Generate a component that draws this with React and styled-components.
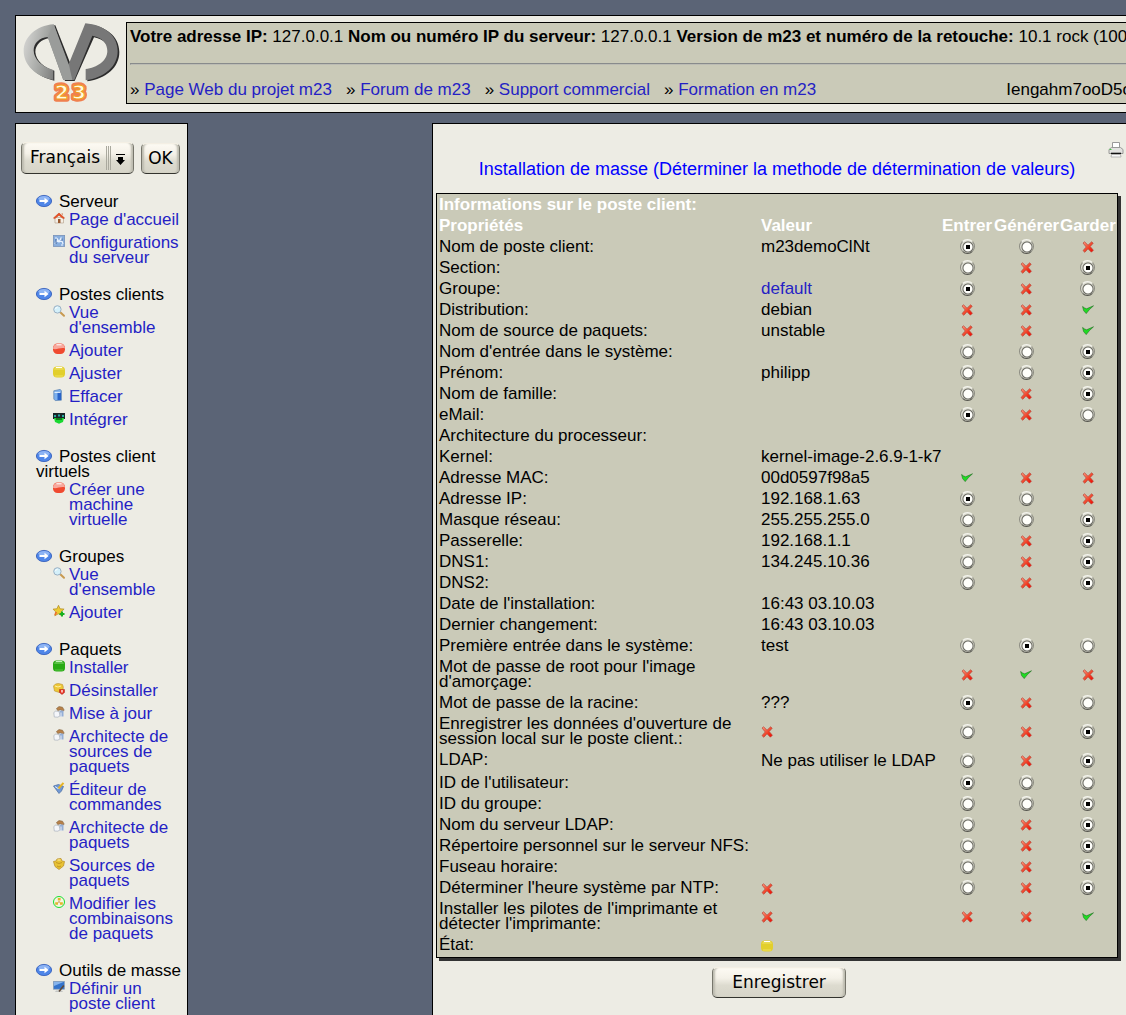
import React from "react";
import styled, { createGlobalStyle } from "styled-components";

const GlobalStyle = createGlobalStyle`
  *, *::before, *::after { box-sizing: border-box; }
  body {
    margin: 0;
    background: #5b6476;
    color: #000;
    font: 17px/15px "Liberation Sans", Arial, sans-serif;
  }
  svg { display: block; flex: none; overflow: visible; }
`;

const Page = styled.div`
  display: flex;
  flex-direction: column;
  gap: 10px;
  height: 100vh;
  padding: 15px 0 0 15px;
  overflow: hidden;
`;

const Link = styled.a`
  color: #251fc4;
  text-decoration: none;
`;

/* ---------- header ---------- */

const Header = styled.header`
  display: flex;
  flex: none;
  height: 98px;
  margin-right: -20px;
  padding: 6px 9px 8px 7px;
  gap: 6px;
  background: #edece4;
  border: 1px solid #000;
`;

const InfoBox = styled.div`
  flex: 1;
  min-width: 0;
  padding: 6px 3px;
  background: #cacab8;
  border: 1px solid #000;
  white-space: nowrap;
`;

const InfoLine = styled.p`
  margin: 0;
`;

const Rule = styled.hr`
  height: 2px;
  margin: 19px 0 17px;
  border: 1px solid;
  border-color: #888b8c #bcbcb4 #bcbcb4 #888b8c;
`;

const LinkBar = styled.nav`
  display: flex;
  gap: 14px;
`;

const Quote = styled.span`
  margin-left: auto;
`;

/* ---------- side menu ---------- */

const Columns = styled.div`
  display: flex;
  flex: 1;
  min-height: 0;
  gap: 244px;
`;

const Sidebar = styled.aside`
  flex: none;
  width: 173px;
  padding: 18px 4px 0 5px;
  background: #edece4;
  border: 1px solid #000;
  border-bottom: 0;
`;

const LanguageForm = styled.form`
  display: flex;
  align-items: flex-end;
  gap: 7px;
  margin-bottom: 20px;
`;

const controlFace = `
  appearance: none;
  margin: 0;
  border: 1px solid;
  border-color: #f4efe4 #77766c #33332e #77766c;
  border-radius: 5px;
  background: linear-gradient(#fdfaf3, #f4f1e8 35%, #dddbcf 60%, #d6d4c8);
  box-shadow: inset 3px 0 2px -1px #bdbcb0, inset -3px 0 2px -1px #bdbcb0,
    inset 0 1px 0 #fffdf6;
  color: #000;
  font: 17px/20px "DejaVu Sans", Verdana, sans-serif;
`;

const SelectWrap = styled.div`
  display: grid;
  width: 113px;
  > * { grid-area: 1 / 1; }
  > svg { justify-self: end; align-self: center; pointer-events: none; }
`;

const LanguageSelect = styled.select`
  ${controlFace}
  width: 100%;
  height: 32px;
  padding: 0 24px 2px 8px;
`;

const Button = styled.button`
  ${controlFace}
  width: ${(p) => p.$width};
  height: 31px;
  padding: 0 0 2px;
`;

const MenuGroup = styled.section`
  margin: 0 0 22px 15px;
`;

const MenuHeading = styled.h2`
  margin: 0 0 3px;
  font: inherit;
  svg { display: inline-block; margin-right: 7px; vertical-align: 0; }
`;

const MenuList = styled.ul`
  display: flex;
  flex-direction: column;
  gap: 8px;
  margin: 0;
  padding: 0 0 0 17px;
  list-style: none;
`;

const MenuItem = styled.li`
  display: flex;
  gap: 4px;
`;

/* ---------- main panel ---------- */

const Panel = styled.main`
  flex: 1;
  margin-right: -16px;
  padding: 17px 0 0 3px;
  background: #edece4;
  border: 1px solid #000;
  border-bottom: 0;
`;

const Content = styled.div`
  width: fit-content;
`;

const PrintRow = styled.div`
  display: flex;
  justify-content: flex-end;
  margin-right: -6px;
`;

const Title = styled.h1`
  margin: 1px 0 14px;
  color: #0000ff;
  font: 18px/20px "Liberation Sans", Arial, sans-serif;
  text-align: center;
`;

const ClientTable = styled.table`
  table-layout: fixed;
  width: 682px;
  border: 1px solid #000;
  border-spacing: 2px;
  background: #cacab8;
  box-shadow: 3px 3px 0 #333;
`;

const Column = styled.col`
  width: ${(p) => p.$width};
`;

const HeadCell = styled.th`
  padding: 1px 0 3px;
  color: #fff;
  text-align: left;
  white-space: nowrap;
`;

const LabelCell = styled.th`
  padding: ${(p) => (p.$tall ? "1px 0 5px" : "1px 0 3px")};
  font-weight: normal;
  text-align: left;
  ${(p) => p.$wrap && "padding-right: 20px;"}
`;

const Cell = styled.td`
  padding: 1px 0 3px;
  white-space: nowrap;
  svg { margin-top: 2px; }
`;

const MarkCell = styled.td`
  padding: 0 0 2px;
  svg { margin: 1px auto 0; }
`;

const Radio = styled.input`
  appearance: none;
  display: block;
  width: 15px;
  height: 15px;
  margin: 0 auto;
  border: 1px solid;
  border-color: #f5f5ee #8c8c82 #55554e #8c8c82;
  border-radius: 50%;
  background: radial-gradient(circle at 7px 7px, #fffffb 4px, #66665e 5px, #d6d6ca 6px, #e4e4da 7px);
  &:checked {
    background: linear-gradient(#000, #000) 5px 5px / 4px 4px no-repeat,
      radial-gradient(circle at 7px 7px, #fffffb 4px, #66665e 5px, #d6d6ca 6px, #e4e4da 7px);
  }
`;

const Actions = styled.div`
  display: flex;
  justify-content: center;
  padding: 9px 0 0 4px;
`;

/* ---------- drawings ---------- */

const Logo = () => (
  <svg width="97" height="80" viewBox="24 21 291 240" role="img" aria-label="m23">
    <defs>
      <linearGradient id="steel" x1="0" y1="0" x2="1" y2="0.3">
        <stop offset="0" stopColor="#dcdcda" />
        <stop offset="0.55" stopColor="#a2a4a1" />
        <stop offset="1" stopColor="#707070" />
      </linearGradient>
      <filter id="glow" x="-20%" y="-30%" width="140%" height="160%">
        <feGaussianBlur stdDeviation="2" />
      </filter>
    </defs>
    <g transform="translate(5 3)" fill="#2c2c2c">
      <path d="M98 30C54 40 26 72 26 108C26 150 62 182 113 194V164C82 156 58 134 56 108C56 86 74 70 98 66L145 195H174L232 64C264 70 276 88 276 110C276 138 246 160 212 164V196C268 188 308 155 308 108C308 62 268 30 211 25L164 150L116 28Z" />
    </g>
    <path fill="url(#steel)" d="M116 28C62 32 26 68 26 108C26 150 62 184 115 195V165C82 156 56 134 56 106C56 84 74 68 98 66L145 195H160V150Z" />
    <path fill="#777" d="M211 25C268 30 308 62 308 108C308 155 268 188 212 196V162C246 158 277 138 277 108C277 86 264 68 232 62L178 195H145L160 150Z" />
    <path fill="#9a9c9a" d="M116 28L162 150L172 195H145L98 66Z" />
    <g fontFamily="DejaVu Sans, sans-serif" fontWeight="bold" fontSize="60" textAnchor="middle" strokeLinejoin="round">
      <g fill="#f08050" stroke="#f08050" strokeWidth="16" filter="url(#glow)">
        <text x="140" y="252">2</text>
        <text x="192" y="252">3</text>
      </g>
      <g fill="#fffbe0" stroke="#f0a020" strokeWidth="3">
        <text x="140" y="252">2</text>
        <text x="192" y="252">3</text>
      </g>
    </g>
  </svg>
);

const ArrowIcon = () => (
  <svg width="16" height="12" viewBox="0 0 16 12" aria-hidden="true">
    <ellipse cx="8" cy="6" rx="7.6" ry="5.6" fill="#4f86e8" stroke="#2a55b8" strokeWidth="0.8" />
    <ellipse cx="8" cy="3.6" rx="5.6" ry="2.6" fill="#a8c8fa" opacity="0.7" />
    <path d="M3.500 5h5V2.800L12.600 6 8.500 9.200V7h-5z" fill="#fff" />
  </svg>
);

const DropIcon = () => (
  <svg width="29" height="28" viewBox="0 0 29 28" aria-hidden="true">
    <path d="M1.500 2v24M3.500 2v24M5.500 2v24" stroke="#aaa99e" />
    <path d="M11 10.500h9" stroke="#000" />
    <path d="M13 13h5v3h2l-4.500 5L11 16h2z" fill="#000" />
  </svg>
);

const PrinterIcon = () => (
  <svg width="16" height="17" viewBox="0 0 16 17" aria-hidden="true">
    <path d="M4.500 7V1.500h7V7" fill="#fff" stroke="#999" />
    <path d="M1 8.500L3.500 6.500h9L15 8.500v4H1z" fill="#e2e2e0" stroke="#9a9a98" />
    <path d="M3 12.500h10" stroke="#111" strokeWidth="1.600" />
    <path d="M3.500 13.500h9l.5 2.500H3z" fill="#f8f8f8" stroke="#aaa" strokeWidth="0.800" />
    <path d="M1.500 8.500h2" stroke="#4c4" />
  </svg>
);

const CrossIcon = () => (
  <svg width="12" height="12" viewBox="0 0 12 12" role="img" aria-label="non">
    <defs>
      <linearGradient id="red" x1="0" y1="0" x2="1" y2="1">
        <stop offset="0" stopColor="#ff9a80" />
        <stop offset="0.6" stopColor="#f03a20" />
        <stop offset="1" stopColor="#f00000" />
      </linearGradient>
    </defs>
    <path
      d="M1 2L2.600 .8 6 4.200 9.600 .8 11.200 2.200 8.200 5.600 11.400 9.200 9.400 11.200 6 7.800 2.800 11.300 1 9.600 4.200 6z"
      fill="url(#red)" stroke="#b8483a" strokeWidth="0.700" strokeLinejoin="round"
    />
  </svg>
);

const CheckIcon = () => (
  <svg width="12" height="12" viewBox="0 0 12 12" role="img" aria-label="oui">
    <path d="M.6 2.500L2.600 4 4.600 4.800 11.500 1.800 7.500 5.500 4.200 9.600 1.600 6.600z" fill="#1fdc22" stroke="#246b24" strokeWidth="0.600" />
  </svg>
);

const drawings = {
  home: (
    <>
      <path d="M2 5.500h8.500V11H2z" fill="#f4efe6" stroke="#b9a894" strokeWidth=".7" />
      <path d="M.5 6L6 1l5.500 5-1.300.6L6 3.200 1.800 6.600z" fill="#f05020" stroke="#c8401c" strokeWidth=".6" />
      <path d="M5 7h2.500v4H5z" fill="#9a5a30" />
      <path d="M8.500 1.200h1.500v2.400L8.500 2.300z" fill="#d8a080" />
    </>
  ),
  config: (
    <>
      <rect x=".4" y=".4" width="11.200" height="11" fill="#88aede" stroke="#7892b8" strokeWidth=".8" />
      <path d="M2 9l2.500-5L6 7l2-4 2 6M2 3h2M8 10h2M3 6.500h6" stroke="#e8f2ff" strokeWidth="1.200" fill="none" />
      <path d="M3 4v5M9 3.500V6" stroke="#3c64a0" />
    </>
  ),
  search: (
    <>
      <path d="M7 7l4 3.800" stroke="#c89a50" strokeWidth="2" strokeLinecap="round" />
      <circle cx="4.400" cy="4.400" r="3.700" fill="#d4f0fa" stroke="#9ab0c4" />
      <path d="M2.500 4a2.200 2.200 0 0 1 2-1.700" stroke="#fff" fill="none" />
    </>
  ),
  red: (
    <>
      <rect y=".5" width="12" height="10.500" rx="4.500" fill="#f04a30" />
      <path d="M0 5.800C3 7.200 8 4.200 12 5.400 11.500 1.800 9.500 .5 6 .5S.4 2 0 5.800z" fill="#f8a89c" />
      <path d="M3.500 1.800h5" stroke="#fff" />
    </>
  ),
  yellow: (
    <>
      <rect y=".5" width="12" height="11" rx="4" fill="#e2cf2c" />
      <path d="M1 3.800h10L9.500 1h-7z" fill="#eadb54" />
      <path d="M3 1.500h6" stroke="#fff" />
      <path d="M2 10h8" stroke="#efe05c" />
    </>
  ),
  green: (
    <>
      <rect y=".5" width="12" height="11" rx="3.500" fill="#28aa14" />
      <path d="M1 4h10L9.500 1h-7z" fill="#58c044" />
      <path d="M3 1.500h6" stroke="#c4f4bc" />
      <path d="M2 10h8" stroke="#54c440" />
    </>
  ),
  trash: (
    <>
      <path d="M.8 1.800L7 .4l1.400 1.200v9.600L2.200 11.600.8 10z" fill="#7cb0ee" stroke="#5880b0" strokeWidth=".7" />
      <path d="M4.500 3h3.500v8L4.500 11z" fill="#2a64c8" />
      <path d="M1.500 3.400h6" stroke="#e8f4ff" />
    </>
  ),
  goblin: (
    <>
      <path d="M0 1h12v6H0z" fill="#182428" />
      <path d="M1 6h10L10 10l-4 1.800L2 10z" fill="#18d830" />
      <path d="M1 3h2v2H1zM5 2.500h2v2H5zM9 3h2v2H9z" fill="#28a8a0" />
      <path d="M3 7h6" stroke="#062006" />
    </>
  ),
  star: (
    <>
      <path d="M5.500 .3l1.600 3.500 4 .3-3 2.700.8 4-3.600-2-3.500 2 .8-4-2.500-2.700 3.800-.3z" fill="#eccb34" stroke="#b08a20" strokeWidth=".7" />
      <path d="M9 6.500v5M6.500 9h5" stroke="#18b020" strokeWidth="2" />
      <path d="M2 10l1.500-3" stroke="#f06a30" strokeWidth="1.500" />
    </>
  ),
  uninstall: (
    <>
      <path d="M.5 3l2-2 3-.5 4 1 .8 2.500-.5 4-3.500 1.500L1.500 8z" fill="#eec838" stroke="#b8902c" strokeWidth=".6" />
      <path d="M2 3l3 1 3-1" stroke="#fff0a0" fill="none" />
      <path d="M6.500 6.500h5v3l-2.500 2-2.500-2z" fill="#e83020" stroke="#a82018" strokeWidth=".5" />
      <path d="M9 7v2.500" stroke="#fff" strokeWidth="1.300" />
    </>
  ),
  builder: (
    <>
      <path d="M3.500 2.500L6 .6l3.500.6 1.700 3-1.500 1-2-1.500-3 .8z" fill="#b9824a" stroke="#80623c" strokeWidth=".6" />
      <path d="M6.500 4.500h4v6h-4z" fill="#94aed6" />
      <path d="M.8 6.500l2-1.500 3.200.5 1 4-2 1.700-3.700-.2z" fill="#f4f6fa" stroke="#a9b0ba" strokeWidth=".7" />
      <path d="M8 6.500v4.500" stroke="#e8eef8" />
    </>
  ),
  editor: (
    <>
      <path d="M.5 4l5-1.500 5 2L8.500 9 6 11.500z" fill="#7198d4" stroke="#46689e" strokeWidth=".7" />
      <path d="M2 4.500l3 2 2-1" stroke="#dceafc" fill="none" />
      <path d="M5.500 6.500L10.500 .8" stroke="#e8b424" strokeWidth="2" />
    </>
  ),
  sources: (
    <>
      <path d="M.5 3.500L3 3l1-2 4-.5L9 3l2.500.5-1 4.500L6 11.500 2 8.500z" fill="#e8c234" stroke="#b48a24" strokeWidth=".7" />
      <path d="M3 4.500l3 1 3-1M4 8l2 1 2-1" stroke="#a87818" strokeWidth=".6" fill="none" />
      <path d="M4.500 2h3" stroke="#fff0a4" />
    </>
  ),
  combine: (
    <>
      <circle cx="6" cy="6" r="5.500" fill="#f6f4e0" stroke="#18e030" />
      <path d="M4.800 2h2.800v2.600H4.800zM2.200 6.200h2.800v2.600H2.200zM7 6.200h2.800v2.600H7z" fill="#e2b42c" />
      <path d="M6 5v2" stroke="#b06a20" strokeWidth=".8" />
    </>
  ),
  computer: (
    <>
      <rect x=".4" y=".4" width="11" height="7.800" fill="#3474cc" stroke="#8aa0b8" strokeWidth=".7" />
      <path d="M1 1h9.500L1 5z" fill="#86b4ec" />
      <path d="M3 9.500h6l1 1.500H2z" fill="#c4c6c4" />
      <path d="M6 10.500l4.800-6" stroke="#5e4a3a" strokeWidth="1.600" />
    </>
  ),
};

const SmallIcon = ({ name }) => (
  <svg width="12" height="12" viewBox="0 0 12 12" aria-hidden="true">
    {drawings[name]}
  </svg>
);

/* ---------- data ---------- */

const projectLinks = ["Page Web du projet m23", "Forum de m23", "Support commercial", "Formation en m23"];

const menu = [
  ["Serveur", [["home", "Page d'accueil"], ["config", "Configurations du serveur"]]],
  ["Postes clients", [
    ["search", "Vue d'ensemble"], ["red", "Ajouter"], ["yellow", "Ajuster"],
    ["trash", "Effacer"], ["goblin", "Intégrer"],
  ]],
  ["Postes client virtuels", [["red", "Créer une machine virtuelle"]]],
  ["Groupes", [["search", "Vue d'ensemble"], ["star", "Ajouter"]]],
  ["Paquets", [
    ["green", "Installer"], ["uninstall", "Désinstaller"], ["builder", "Mise à jour"],
    ["builder", "Architecte de sources de paquets"], ["editor", "Éditeur de commandes"],
    ["builder", "Architecte de paquets"], ["sources", "Sources de paquets"],
    ["combine", "Modifier les combinaisons de paquets"],
  ]],
  ["Outils de masse", [["computer", "Définir un poste client"]]],
];

const choices = ["Entrer", "Générer", "Garder"];
const columnWidths = ["320px", "179px", "50px", "64px", "55px"];

/* Marks per column: o = free, * = chosen, x = not possible, v = always on. */
const rows = [
  ["Nom de poste client:", "m23demoClNt", "*ox"],
  ["Section:", "", "ox*"],
  ["Groupe:", <Link href="#default">default</Link>, "*xo"],
  ["Distribution:", "debian", "xxv"],
  ["Nom de source de paquets:", "unstable", "xxv"],
  ["Nom d'entrée dans le système:", "", "oo*"],
  ["Prénom:", "philipp", "oo*"],
  ["Nom de famille:", "", "ox*"],
  ["eMail:", "", "*xo"],
  ["Architecture du processeur:", "", "   "],
  ["Kernel:", "kernel-image-2.6.9-1-k7", "   "],
  ["Adresse MAC:", "00d0597f98a5", "vxx"],
  ["Adresse IP:", "192.168.1.63", "*ox"],
  ["Masque réseau:", "255.255.255.0", "oo*"],
  ["Passerelle:", "192.168.1.1", "ox*"],
  ["DNS1:", "134.245.10.36", "ox*"],
  ["DNS2:", "", "ox*"],
  ["Date de l'installation:", "16:43 03.10.03", "   "],
  ["Dernier changement:", "16:43 03.10.03", "   "],
  ["Première entrée dans le système:", "test", "o*o"],
  ["Mot de passe de root pour l'image d'amorçage:", "", "xvx"],
  ["Mot de passe de la racine:", "???", "*xo"],
  ["Enregistrer les données d'ouverture de session local sur le poste client.:", <CrossIcon />, "ox*"],
  ["LDAP:", "Ne pas utiliser le LDAP", "ox*"],
  ["ID de l'utilisateur:", "", "*oo"],
  ["ID du groupe:", "", "oo*"],
  ["Nom du serveur LDAP:", "", "ox*"],
  ["Répertoire personnel sur le serveur NFS:", "", "ox*"],
  ["Fuseau horaire:", "", "ox*"],
  ["Déterminer l'heure système par NTP:", <CrossIcon />, "ox*"],
  ["Installer les pilotes de l'imprimante et détecter l'imprimante:", <CrossIcon />, "xxv"],
  ["État:", <SmallIcon name="yellow" />, "   "],
];

const Mark = ({ kind, row, label }) => {
  if (kind === "x") return <CrossIcon />;
  if (kind === "v") return <CheckIcon />;
  if (kind === " ") return null;
  return <Radio type="radio" name={`row${row}`} value={label} defaultChecked={kind === "*"} aria-label={label} />;
};

export default function App() {
  return (
    <Page>
      <GlobalStyle />
      <Header>
        <Logo />
        <InfoBox>
          <InfoLine>
            <b>Votre adresse IP:</b> 127.0.0.1 <b>Nom ou numéro IP du serveur:</b> 127.0.0.1{" "}
            <b>Version de m23 et numéro de la retouche:</b> 10.1 rock (1003
          </InfoLine>
          <Rule />
          <LinkBar>
            {projectLinks.map((text) => (
              <span key={text}>» <Link href="#projet">{text}</Link></span>
            ))}
            <Quote>Iengahm7ooD5o</Quote>
          </LinkBar>
        </InfoBox>
      </Header>
      <Columns>
        <Sidebar>
          <LanguageForm onSubmit={(e) => e.preventDefault()}>
            <SelectWrap>
              <LanguageSelect aria-label="Langue" defaultValue="fr">
                <option value="fr">Français</option>
              </LanguageSelect>
              <DropIcon />
            </SelectWrap>
            <Button $width="39px">OK</Button>
          </LanguageForm>
          {menu.map(([heading, items]) => (
            <MenuGroup key={heading}>
              <MenuHeading><ArrowIcon />{heading}</MenuHeading>
              <MenuList>
                {items.map(([icon, text]) => (
                  <MenuItem key={text}>
                    <SmallIcon name={icon} />
                    <Link href="#menu">{text}</Link>
                  </MenuItem>
                ))}
              </MenuList>
            </MenuGroup>
          ))}
        </Sidebar>
        <Panel>
          <Content>
            <PrintRow><PrinterIcon /></PrintRow>
            <Title>Installation de masse (Déterminer la methode de détermination de valeurs)</Title>
            <ClientTable>
              <colgroup>
                {columnWidths.map((w) => <Column key={w} $width={w} />)}
              </colgroup>
              <thead>
                <tr><HeadCell colSpan={5}>Informations sur le poste client:</HeadCell></tr>
                <tr>
                  <HeadCell>Propriétés</HeadCell>
                  <HeadCell>Valeur</HeadCell>
                  {choices.map((c) => <HeadCell key={c}>{c}</HeadCell>)}
                </tr>
              </thead>
              <tbody>
                {rows.map(([label, value, marks], i) => (
                  <tr key={label}>
                    <LabelCell scope="row" $tall={label === "LDAP:"} $wrap={label.length > 44}>{label}</LabelCell>
                    <Cell>{value}</Cell>
                    {choices.map((c, n) => (
                      <MarkCell key={c}><Mark kind={marks[n]} row={i} label={c} /></MarkCell>
                    ))}
                  </tr>
                ))}
              </tbody>
            </ClientTable>
            <Actions><Button $width="134px">Enregistrer</Button></Actions>
          </Content>
        </Panel>
      </Columns>
    </Page>
  );
}
